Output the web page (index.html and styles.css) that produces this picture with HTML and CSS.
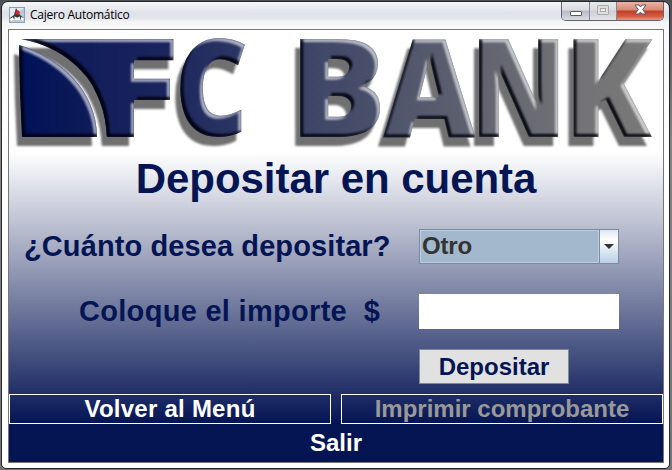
FILE: index.html
```html
<!DOCTYPE html>
<html lang="es">
<head>
<meta charset="utf-8">
<title>Cajero Automático</title>
<link rel="stylesheet" href="styles.css">
</head>
<body>
<div class="window">
  <header class="titlebar">
    <svg class="app-icon" viewBox="0 0 16 16">
      <rect x=".5" y=".5" width="15" height="15" fill="#b9c9d6" stroke="#8ba1b4"/>
      <path d="M1 1h14L1 11z" fill="#e3ebf1"/>
      <path d="M7 1 5 8 1 11l2 2 2-2 1 2h5l1-2 2 2 1-2-4-3z" fill="#303943"/>
      <path d="M5.500 9q3 3 5.500 0v4H5.500z" fill="#f6f6f6"/>
      <path d="M1 12l3-2 1 3-3 1zM12 10l3 1-1 3-2-1z" fill="#fff"/>
      <circle cx="8.600" cy="5.500" r="2.200" fill="#dd252c"/>
    </svg>
    <h1 class="caption">Cajero Automático</h1>
    <div class="controls">
      <button class="control minimize" aria-label="Minimizar"><svg width="27" height="18" viewBox="0 0 27 18"><rect x="8.500" y="9.500" width="11" height="4" rx=".5" fill="#fff" stroke="#555a70"/></svg></button>
      <button class="control maximize" aria-label="Maximizar"><svg width="26" height="18" viewBox="0 0 26 18"><rect x="7.500" y="3.500" width="11" height="9" rx=".5" fill="#dedede" stroke="#aaa"/><rect x="10.500" y="6.500" width="5" height="3" fill="#eee" stroke="#aaa"/></svg></button>
      <button class="control close" aria-label="Cerrar"><svg width="46" height="18" viewBox="0 0 46 18"><path d="M18 3h4l1.500 2L25 3h4l-3.300 4.500L29 12h-4l-1.500-2-1.500 2h-4l3.300-4.500z" fill="#fff" stroke="#56566b"/></svg></button>
    </div>
  </header>
  <main class="client">
    <svg class="logo" viewBox="9 30 654 120" role="img" aria-label="FC BANK">
      <defs>
        <filter id="bevel" filterUnits="userSpaceOnUse" x="9" y="30" width="654" height="122" color-interpolation-filters="sRGB">
          <feOffset in="SourceAlpha" dx="-5" dy="9" result="so"/>
          <feGaussianBlur in="so" stdDeviation="1.200" result="sb"/>
          <feFlood flood-color="#707070" result="sc"/>
          <feComposite in="sc" in2="sb" operator="in" result="shadow"/>
          <feOffset in="SourceAlpha" dx="-3" dy="3" result="ho"/>
          <feComposite in="SourceAlpha" in2="ho" operator="out" result="hm"/>
          <feGaussianBlur in="hm" stdDeviation=".8" result="hb"/>
          <feFlood flood-color="#fff" flood-opacity=".65" result="hc"/>
          <feComposite in="hc" in2="hb" operator="in" result="hi0"/>
          <feComposite in="hi0" in2="SourceAlpha" operator="in" result="hi"/>
          <feOffset in="SourceAlpha" dx="3" dy="-3" result="do"/>
          <feComposite in="SourceAlpha" in2="do" operator="out" result="dm"/>
          <feGaussianBlur in="dm" stdDeviation=".8" result="db"/>
          <feFlood flood-color="#000008" flood-opacity=".95" result="dc"/>
          <feComposite in="dc" in2="db" operator="in" result="da0"/>
          <feComposite in="da0" in2="SourceAlpha" operator="in" result="da"/>
          <feMerge><feMergeNode in="shadow"/><feMergeNode in="SourceGraphic"/><feMergeNode in="hi"/><feMergeNode in="da"/></feMerge>
        </filter>
        <clipPath id="arc"><path d="M21 38.500H180V140H107C106 83 69 48 21 38.500Z"/></clipPath>
        <linearGradient id="gs"><stop stop-color="#001157"/><stop offset="1" stop-color="#101c59"/></linearGradient>
        <linearGradient id="gf"><stop stop-color="#111d5a"/><stop offset="1" stop-color="#1c265d"/></linearGradient>
        <linearGradient id="gc"><stop stop-color="#1d275e"/><stop offset="1" stop-color="#2e3864"/></linearGradient>
        <linearGradient id="gb"><stop stop-color="#3a4266"/><stop offset="1" stop-color="#4c526b"/></linearGradient>
        <linearGradient id="ga"><stop stop-color="#4d536b"/><stop offset="1" stop-color="#5f6270"/></linearGradient>
        <linearGradient id="gn"><stop stop-color="#606371"/><stop offset="1" stop-color="#707174"/></linearGradient>
        <linearGradient id="gk"><stop stop-color="#727275"/><stop offset="1" stop-color="#797979"/></linearGradient>
      </defs>
      <rect x="9" y="30" width="654" height="120" fill="#fff"/>
      <g filter="url(#bevel)">
        <path d="M19 45C60 57 97 91 97 137H22L20 92Z" fill="url(#gs)"/>
        <path d="M21 39H134V137H107C106 83 69 48 21 39Z" fill="#111d5a"/>
        <g class="letters">
          <g clip-path="url(#arc)"><text transform="translate(79 137) scale(1.380 1)" fill="url(#gf)">F</text></g>
          <text transform="translate(174.400 136) scale(.83 .98)" fill="url(#gc)">C</text>
          <text transform="translate(289 137) scale(1.060 1)" fill="url(#gb)">B</text>
          <text transform="translate(383 137) scale(.93 1)" fill="url(#ga)">A</text>
          <text transform="translate(470 137) scale(.85 1)" fill="url(#gn)">N</text>
          <text transform="translate(563.500 137) scale(.94 1)" fill="url(#gk)">K</text>
        </g>
      </g>
    </svg>
    <h2 class="heading">Depositar en cuenta</h2>
    <form class="form">
      <label class="label label-amount" for="amount">¿Cuánto desea depositar?</label>
      <div class="combo" id="amount"><span class="combo-value">Otro</span><span class="combo-arrow"><svg width="10" height="5" viewBox="0 0 10 5"><path d="M0 0h10L5 5z" fill="#333"/></svg></span></div>
      <label class="label label-value" for="value">Coloque el importe&nbsp; $</label>
      <input class="field" id="value" type="text">
      <button class="submit" type="button">Depositar</button>
    </form>
    <nav class="actions">
      <button class="action back">Volver al Menú</button>
      <button class="action disabled" disabled>Imprimir comprobante</button>
    </nav>
    <button class="exit">Salir</button>
  </main>
</div>
</body>
</html>
```
FILE: styles.css
```css
* { box-sizing: border-box; }
body {
  margin: 0;
  width: 672px;
  height: 470px;
  padding: 1px 2px 1px 1px;
  overflow: hidden;
  background: linear-gradient(#4b5054, #858585 30%, #747474);
  font-family: "Liberation Sans", sans-serif;
  font-weight: bold;
}
button { font: inherit; margin: 0; padding: 0; border: 0; background: none; }
.window {
  width: 669px;
  height: 468px;
  border: 1px solid #26262b;
  border-radius: 7px 7px 5px 5px;
  padding: 0 5px 5px 6px;
  background: linear-gradient(#f6f6f8 0, #dfe2e9 11px, #e3e5ea 16px, #f5f5f5 20px, #fafafa 28px, #fff 160px);
}
.titlebar { height: 27px; display: flex; align-items: flex-start; padding-left: 1px; }
.app-icon { width: 16px; height: 16px; margin-top: 5px; }
.caption {
  margin: 4px 0 0 5px;
  font: 12px/18px "Open Sans", sans-serif;
  color: #000;
  letter-spacing: -.25px;
  white-space: nowrap;
}
.controls {
  display: flex;
  margin-left: auto;
  height: 19px;
  border: 1px solid #64636b;
  border-top: 0;
  border-radius: 0 0 5px 5px;
  overflow: hidden;
}
.control { height: 18px; background: linear-gradient(#ededf1, #d9d9e0 45%, #b8bbc4 50%, #dadbe1); border-right: 1px solid #85868e; }
.control svg { display: block; }
.control.maximize { background: linear-gradient(#e9e9eb, #dcdcdf 45%, #cfd0d3 50%, #e2e2e5); }
.control.close { border: 0; background: linear-gradient(#e9b3a6, #d98874 45%, #c03d25 50%, #d65c40 80%, #e79a7b); }
.client {
  width: 656px;
  height: 434px;
  border: 1px solid #777;
  display: flex;
  flex-direction: column;
  background: linear-gradient(#fff 122px, #051554 393px);
}
.logo { display: block; width: 654px; height: 120px; flex: none; overflow: visible; }
.letters { font-family: "Open Sans", sans-serif; font-weight: 800; font-size: 137px; }
.heading { margin: 6px 0 0; font-size: 42px; line-height: 46px; color: #051554; text-align: center; white-space: nowrap; letter-spacing: -.04px; }
.form {
  margin-top: 27px;
  display: grid;
  grid-template-columns: 410px 200px;
  grid-template-rows: 35px 30px 35px 20px 35px;
  align-content: start;
  height: 165px;
}
.label { font-size: 29px; line-height: 35px; color: #051554; white-space: nowrap; }
.label-amount { grid-row: 1; padding-left: 15px; letter-spacing: .1px; }
.combo { grid-row: 1; grid-column: 2; display: flex; border: 1px solid #7a8a99; }
.combo-value { flex: 1; border: 1px solid #b8cfe5; background: #a3b8cc; color: #333; font-size: 24px; line-height: 30px; padding-left: 1px; letter-spacing: -.2px; }
.combo-arrow { width: 19px; border-left: 1px solid #7a8a99; background: linear-gradient(#dde8f3, #fff 30%, #b8cfe5); display: flex; align-items: center; justify-content: center; }
.label-value { grid-row: 3; padding-left: 70px; letter-spacing: .3px; }
.field { grid-row: 3; grid-column: 2; width: 200px; border: 0; padding: 0; background: #fff; }
.submit { grid-row: 5; grid-column: 2; width: 150px; border: 1px solid #7a8a99; background: #e1e1e1; color: #051554; font-size: 24px; line-height: 31px; }
.actions { display: grid; grid-template-columns: 322px 322px; column-gap: 10px; }
.action { height: 30px; border: 1px solid #fff; color: #fff; font-size: 24px; line-height: 28px; }
.action.back { letter-spacing: .25px; }
.action.disabled { color: #999; }
.exit { height: 38px; color: #fff; font-size: 24px; line-height: 38px; }
```
